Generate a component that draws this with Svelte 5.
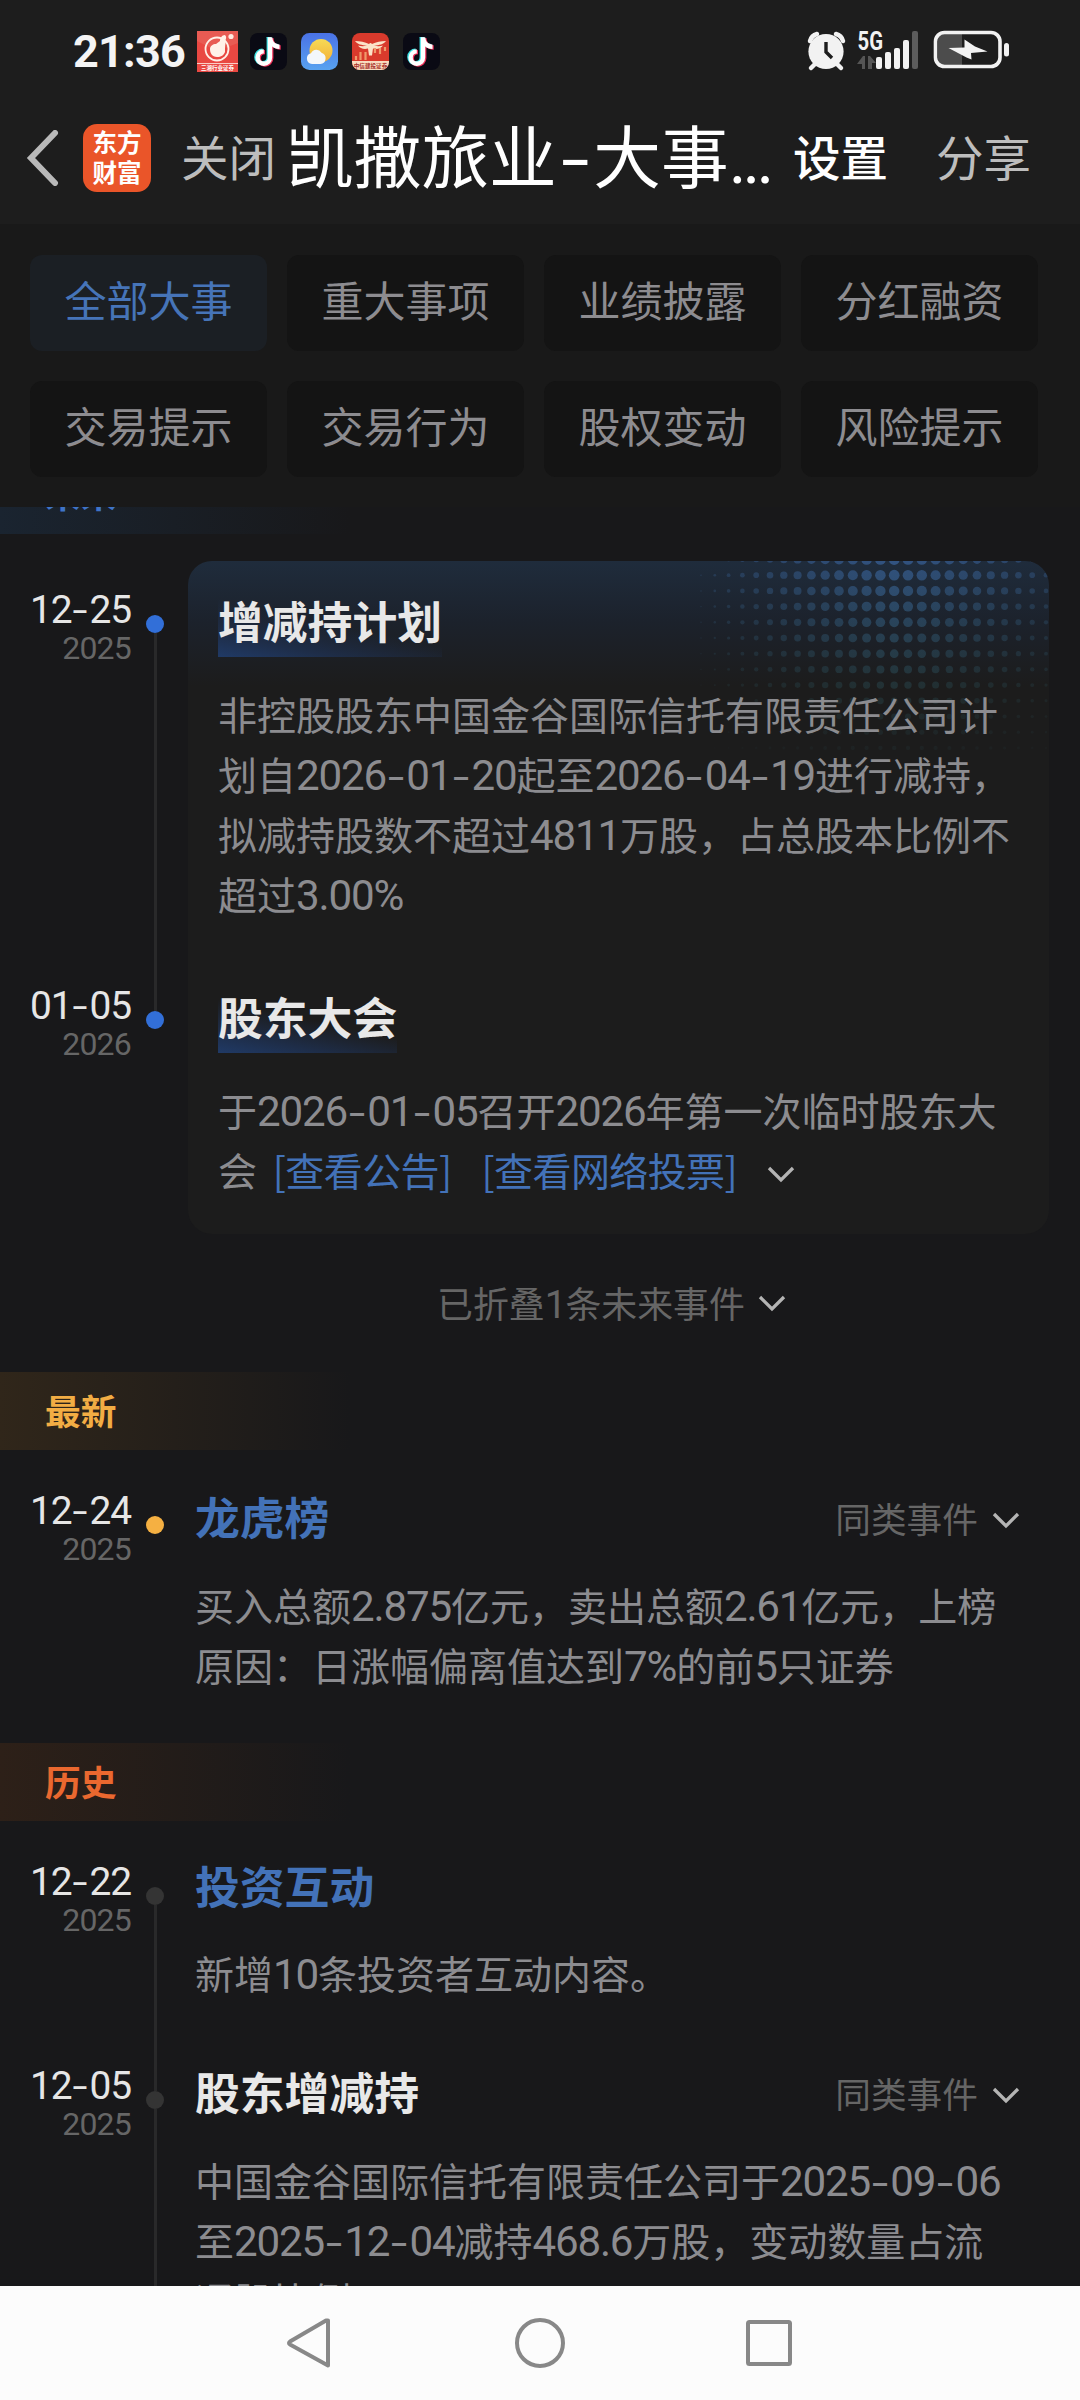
<script lang="ts">
  type Run = { text: string; kind: "cjk" | "num" | "dash" };

  const tabs = ["全部大事", "重大事项", "业绩披露", "分红融资", "交易提示", "交易行为", "股权变动", "风险提示"];
  let activeTab = $state(0);

  const future = [
    {
      date: "12-25",
      year: "2025",
      title: "增减持计划",
      lines: [
        "非控股股东中国金谷国际信托有限责任公司计",
        "划自2026-01-20起至2026-04-19进行减持，",
        "拟减持股数不超过4811万股，占总股本比例不",
        "超过3.00%"
      ],
      links: []
    },
    {
      date: "01-05",
      year: "2026",
      title: "股东大会",
      lines: ["于2026-01-05召开2026年第一次临时股东大", "会"],
      links: ["[查看公告]", "[查看网络投票]"]
    }
  ];

  const latest = [
    {
      date: "12-24",
      year: "2025",
      title: "龙虎榜",
      link: true,
      similar: true,
      lines: ["买入总额2.875亿元，卖出总额2.61亿元，上榜", "原因：日涨幅偏离值达到7%的前5只证券"]
    }
  ];

  const history = [
    {
      date: "12-22",
      year: "2025",
      title: "投资互动",
      link: true,
      similar: false,
      lines: ["新增10条投资者互动内容。"]
    },
    {
      date: "12-05",
      year: "2025",
      title: "股东增减持",
      link: false,
      similar: true,
      lines: [
        "中国金谷国际信托有限责任公司于2025-09-06",
        "至2025-12-04减持468.6万股，变动数量占流",
        "通股比例"
      ]
    }
  ];

  // 数字与连字符使用不同的字宽
  function split(text: string): Run[] {
    return (text.match(/[0-9.%]+|-|[^0-9.%-]+/g) ?? []).map((t) => ({
      text: t,
      kind: t === "-" ? "dash" : /[0-9]/.test(t) ? "num" : "cjk"
    }));
  }

  // 卡片右上角的半调圆点
  const dots: { x: number; y: number; r: number; o: number }[] = [];
  for (let row = 0; row < 13; row++) {
    for (let col = 0; col < 26; col++) {
      const dx = Math.abs(col - 14) * 13.8;
      const dy = row * 15.7;
      const r = 5.4 * (1 - Math.pow(dx / 210, 1.8)) * (1 - Math.pow(dy / 260, 1.6));
      const o = Math.max(0, 0.9 - dx / 360) * Math.max(0, 1 - row / 14);
      if (r > 0.4) dots.push({ x: 14 + col * 13.8, y: row * 15.7 - 1.5, r, o });
    }
  }
</script>

{#snippet rich(text: string)}
  {#each split(text) as run}<span class={run.kind}>{run.text}</span>{/each}
{/snippet}

{#snippet chevron()}
  <svg class="chevron" viewBox="0 0 28 18" width="28" height="18">
    <path d="M2 3l12 12L26 3" fill="none" stroke="currentColor" stroke-width="3.300" />
  </svg>
{/snippet}

{#snippet note(color: string, shift: string)}
  <g transform="translate({shift})">
    <path d="M19.500 4v20a6.200 6.200 0 1 1-6.200-6.200" fill="none" stroke={color} stroke-width="4.400" />
    <path d="M17.300 4h4.400c.5 4.200 3 6.600 7.300 7v4.400c-3.600 0-6.400-1.400-9-4z" fill={color} />
  </g>
{/snippet}

{#snippet douyin()}
  <svg viewBox="0 0 37 37" width="37" height="37">
    <rect width="37" height="37" rx="8" fill="#0a0a14" />
    {@render note("#3fe3e6", "-.700 0")}
    {@render note("#f0305a", "1.700 1.300")}
    {@render note("#fff", ".500 .600")}
  </svg>
{/snippet}

{#snippet stamp(date: string, year: string)}
  <div class="stamp">
    <div class="date">{@render rich(date)}</div>
    <div class="year">{year}</div>
  </div>
{/snippet}

{#snippet event(item: (typeof history)[number], tone: string)}
  <article class="event">
    {@render stamp(item.date, item.year)}
    <div class="axis {tone}"><i></i></div>
    <div class="content">
      <div class="head" class:tall={item.similar}>
        <h3 class:link={item.link}>{item.title}</h3>
        {#if item.similar}
          <span class="more">同类事件{@render chevron()}</span>
        {/if}
      </div>
      {#each item.lines as line}
        <p>{@render rich(line)}</p>
      {/each}
    </div>
  </article>
{/snippet}

<div class="screen">
  <div class="status">
    <span class="clock">21:36</span>
    <div class="apps">
      <svg viewBox="0 0 41 41" width="41" height="41">
        <rect width="41" height="41" fill="#e94842" />
        <path d="M0 0h41v12L20 20 0 10z" fill="#e8695f" opacity=".6" />
        <circle cx="20" cy="18" r="11.500" fill="none" stroke="#fff1e8" stroke-width="1.800" />
        <path d="M13 18c0-3 3-5 6-5l4-3c0-3 2-6 5-6 2 2 1 4 0 6 1 2 0 4 0 6v5c-1 3-4 5-8 5-5 0-7-4-7-8z" fill="#fff1e8" />
        <circle cx="34" cy="5.500" r="2.600" fill="#ffe9e0" />
        <path d="M0 32.500h41" stroke="#fff1e8" stroke-width=".8" />
        <text x="20.500" y="39" font-size="5.500" font-weight="700" text-anchor="middle" fill="#fff">三湘行业证券</text>
      </svg>
      {@render douyin()}
      <svg viewBox="0 0 37 37" width="37" height="37">
        <defs>
          <linearGradient id="sky" x2="0" y2="1"><stop stop-color="#4a72e6" /><stop offset="1" stop-color="#58a2f0" /></linearGradient>
          <linearGradient id="sun" x2="0" y2="1"><stop stop-color="#f7da55" /><stop offset="1" stop-color="#f3b23a" /></linearGradient>
        </defs>
        <rect width="37" height="37" rx="8.500" fill="url(#sky)" />
        <circle cx="20" cy="17.500" r="11.500" fill="url(#sun)" />
        <path d="M11 31a5.500 5.500 0 0 1-1-10.800 6 6 0 0 1 10.500-.5A5.800 5.800 0 0 1 19.500 31z" fill="#f3f7fb" />
      </svg>
      <svg viewBox="0 0 37 37" width="37" height="37">
        <defs><clipPath id="rc"><rect width="37" height="37" rx="8" /></clipPath></defs>
        <g clip-path="url(#rc)">
          <rect width="37" height="37" fill="#d93a2c" />
          <path d="M3 8c5 0 10 1 14 3q1.500-2 3 0c4-2 9-3 14-3-2 3-7 4.500-12 4.500 3 1 6 1 9 0-2 3-6 4-10 3l-1 7h-3l-1-7c-4 1-8 0-10-3 3 1 6 1 9 0C10 12.500 5 11 3 8z" fill="#fbe3c8" />
          <path d="M4 27v-4M8.500 27v-8M13.500 27v-8M23 20v-5M28 21v-6M33 18v-4" stroke="#ef9a6c" stroke-width="2.200" />
          <rect y="28" width="37" height="9" fill="#f8dcc0" />
          <text x="18.500" y="34.800" font-size="5.600" font-weight="700" text-anchor="middle" fill="#a8322a">中信建投证券</text>
        </g>
      </svg>
      {@render douyin()}
    </div>
    <svg class="indicators" viewBox="0 0 204 42" width="204" height="42">
      <g fill="none" stroke="#f2f2f2" stroke-width="4.500" stroke-linecap="round">
        <path d="M3 11a10 10 0 0 1 7-7M29 4a10 10 0 0 1 7 7" />
        <path d="M8 34l-4 4M30 34l4 4" />
      </g>
      <circle cx="19" cy="21.500" r="17.600" fill="#f2f2f2" />
      <path d="M19 12v10l6 6" fill="none" stroke="#1d1d1d" stroke-width="3.400" />
      <text x="50.500" y="20" font-size="25" font-weight="700" textLength="25.500" lengthAdjust="spacingAndGlyphs" fill="#f2f2f2">5G</text>
      <path d="M50 34l6-8h2v13h-3v-5zM61 26h2l6 7h-4v6h-4z" fill="#555" />
      <g fill="#f2f2f2">
        <rect x="69" y="27" width="6" height="12" rx="2" />
        <rect x="78" y="22" width="6" height="17" rx="2" />
        <rect x="87" y="18" width="6" height="21" rx="2" />
        <rect x="96" y="10" width="6" height="29" rx="2" />
        <rect x="105" y="1" width="6" height="38" rx="2" fill="#5c5c5c" />
      </g>
      <path d="M137 4h18v31h-18a6 6 0 0 1-6-6V10a6 6 0 0 1 6-6z" fill="#4c4c4c" />
      <rect x="128.500" y="2.500" width="64.500" height="34" rx="9" fill="none" stroke="#f2f2f2" stroke-width="3.600" />
      <rect x="197" y="13" width="5" height="13.500" rx="2.500" fill="#f2f2f2" />
      <path d="M157.500 9.500l10.500 7 12.500 5-16.500 1.500.500 6.500-5-2-18-9.500 16-.500z" fill="#f2f2f2" />
    </svg>
  </div>

  <header class="bar">
    <svg class="back" viewBox="0 0 34 56" width="34" height="56">
      <path d="M30 3L6 28l24 25" fill="none" stroke="#b9b9b9" stroke-width="6" stroke-linecap="round" />
    </svg>
    <div class="logo"><span>东方</span><span>财富</span></div>
    <span class="action">关闭</span>
    <h1>凯撒旅业<span class="dash">-</span>大事<span class="dots">...</span></h1>
    <span class="action strong">设置</span>
    <span class="action">分享</span>
  </header>

  <nav class="tabs">
    {#each tabs as tab, i}
      <button class:active={i === activeTab} onclick={() => (activeTab = i)}>{tab}</button>
    {/each}
  </nav>

  <main>
    <div class="scroll">
      <h2 class="blue">未来</h2>
      <section class="future">
        {#each future as item, i}
          <article class="event">
            {@render stamp(item.date, item.year)}
            <div class="axis blue"><i></i></div>
            <div class="content">
              {#if i === 0}
                <svg class="halftone" viewBox="0 0 362 210" width="362" height="210">
                  <defs>
                    <linearGradient id="tone" gradientUnits="userSpaceOnUse" x1="0" y1="0" x2="0" y2="130">
                      <stop stop-color="#34588a" />
                      <stop offset="1" stop-color="#2c545c" />
                    </linearGradient>
                  </defs>
                  {#each dots as dot}
                    <circle cx={dot.x} cy={dot.y} r={dot.r} opacity={dot.o} fill="url(#tone)" />
                  {/each}
                </svg>
              {/if}
              <h3><span>{item.title}</span></h3>
              {#each item.lines as line, n}
                <p>
                  {@render rich(line)}
                  {#if n === item.lines.length - 1 && item.links.length}
                    {#each item.links as link}<a href="#top">{link}</a>{/each}{@render chevron()}
                  {/if}
                </p>
              {/each}
            </div>
          </article>
        {/each}
      </section>
      <div class="folded">
        <span>已折叠<span class="num">1</span>条未来事件</span>
        {@render chevron()}
      </div>

      <h2 class="amber">最新</h2>
      <section class="plain">
        {#each latest as item}
          {@render event(item, "amber")}
        {/each}
      </section>

      <h2 class="orange">历史</h2>
      <section class="plain">
        {#each history as item}
          {@render event(item, "grey")}
        {/each}
      </section>
    </div>
  </main>

  <footer>
    <svg viewBox="0 0 50 54" width="50" height="54">
      <path d="M43 4.500v45L5 28.500q-2-1.500 0-3L41 4.500z" fill="none" stroke="#888" stroke-width="4" stroke-linejoin="round" />
    </svg>
    <svg viewBox="0 0 54 54" width="54" height="54">
      <circle cx="27" cy="27" r="23" fill="none" stroke="#888" stroke-width="4" />
    </svg>
    <svg viewBox="0 0 50 54" width="50" height="54">
      <rect x="3" y="6" width="42" height="42" rx="1.500" fill="none" stroke="#888" stroke-width="4" />
    </svg>
  </footer>
</div>

<style>
  :global(body) {
    background: #18181a;
  }

  .screen {
    display: flex;
    flex-direction: column;
    width: 1080px;
    height: 2400px;
    overflow: hidden;
    background: #18181a;
    color: #e6e6e6;
    font-family: "Noto Sans CJK SC", sans-serif;
  }

  h1,
  h2,
  h3,
  p {
    margin: 0;
  }

  .num {
    font-family: Roboto, sans-serif;
    font-size: 1.08em;
    letter-spacing: -0.028em;
    line-height: 1;
  }

  .dash {
    display: inline-block;
    width: 0.52em;
    font-family: Roboto, sans-serif;
    text-align: center;
    line-height: 1;
    transform: scaleX(1.5);
  }

  /* 状态栏 */
  .status {
    display: flex;
    align-items: center;
    height: 102px;
    flex: none;
    box-sizing: border-box;
    padding: 0 69px 0 73px;
    background: #1d1d1d;
  }

  .clock {
    width: 124px;
    font: 700 45px/1 Roboto, sans-serif;
    letter-spacing: -0.8px;
    color: #f4f4f4;
  }

  .apps {
    display: flex;
    align-items: center;
    gap: 14px;
  }

  .apps svg:first-child {
    margin-right: -2px;
  }

  .indicators {
    margin-left: auto;
    overflow: visible;
    font-family: Roboto, sans-serif;
  }

  /* 标题栏 */
  .bar {
    display: flex;
    align-items: center;
    height: 122px;
    flex: none;
    box-sizing: border-box;
    padding: 0 49px 10px 25px;
    background: #1d1d1d;
  }

  .logo {
    display: flex;
    flex-direction: column;
    justify-content: center;
    width: 68px;
    height: 68px;
    box-sizing: border-box;
    padding-bottom: 3px;
    margin: 0 30px 0 24px;
    border-radius: 14px;
    background: #ea5529;
    color: #fff;
    font-size: 24.5px;
    font-weight: 700;
    line-height: 30px;
    text-align: center;
  }

  .action {
    flex: none;
    padding-bottom: 4px;
    font-size: 47.5px;
    line-height: 64px;
    color: #bdbdbd;
  }

  .action.strong {
    margin: 0 48px 0 auto;
    font-weight: 500;
    color: #fff;
  }

  h1 {
    margin-left: 10px;
    padding-bottom: 4px;
    white-space: nowrap;
    font-size: 67.7px;
    font-weight: 400;
    line-height: 90px;
    color: #fff;
  }

  h1 .dash {
    width: 0.54em;
  }

  h1 .dots {
    font-family: Roboto, sans-serif;
    letter-spacing: -4px;
  }

  /* 分类标签 */
  .tabs {
    display: grid;
    grid-template-columns: repeat(4, 237px);
    grid-auto-rows: 96px;
    gap: 30px 20px;
    height: 283px;
    flex: none;
    box-sizing: border-box;
    padding: 31px 0 0 30px;
    background: #191919;
  }

  .tabs button {
    padding: 0 0 9px;
    border: 0;
    border-radius: 12px;
    background: #141414;
    color: #8d8c90;
    font: 42px/60px "Noto Sans CJK SC", sans-serif;
  }

  .tabs button.active {
    background: #1b1f24;
    color: #4674b8;
  }

  main {
    flex: 1;
    min-height: 0;
    overflow: hidden;
  }

  .scroll {
    margin-top: -51px;
  }

  h2 {
    height: 78px;
    padding-left: 45px;
    font-size: 35.7px;
    font-weight: 700;
    line-height: 76px;
  }

  h2.blue {
    color: #3f74c8;
    line-height: 74px;
    background: linear-gradient(90deg, #1a2430, #18181a 350px);
  }

  h2.amber {
    color: #f2ad44;
    background: linear-gradient(90deg, #30261a, #18181a 350px);
  }

  h2.orange {
    color: #ea682f;
    background: linear-gradient(90deg, #2d2018, #18181a 350px);
  }

  /* 时间轴 */
  .event {
    display: flex;
  }

  .stamp {
    width: 131px;
    flex: none;
    padding-top: 26px;
    text-align: right;
    white-space: nowrap;
  }

  .date {
    height: 40px;
    font-size: 36px;
    line-height: 40px;
  }

  .date .dash {
    width: 18px;
  }

  .year {
    margin-top: 3px;
    font: 32px/36px Roboto, sans-serif;
    letter-spacing: -0.8px;
    color: #666;
  }

  .axis {
    display: flex;
    flex-direction: column;
    align-items: center;
    width: 48px;
    flex: none;
    padding-top: 54px;
    box-sizing: border-box;
  }

  .axis i {
    width: 18px;
    height: 18px;
    border-radius: 50%;
    background: #343434;
  }

  .axis.blue i {
    background: #326fd8;
  }

  .axis.amber i {
    background: #f5b042;
  }

  .axis::after {
    content: "";
    flex: 1;
    width: 3px;
    margin-bottom: -54px;
    background: #29292a;
  }

  .axis.amber::after,
  .future .event:last-child .axis::after {
    display: none;
  }

  .content {
    flex: 1;
    box-sizing: border-box;
  }

  h3 {
    font-size: 44.8px;
    font-weight: 700;
    line-height: 56px;
    color: #e8e8e8;
  }

  h3.link {
    color: #4372b8;
  }

  p {
    height: 60px;
    font-size: 39px;
    line-height: 57px;
    white-space: nowrap;
    color: #8c8c90;
  }

  .chevron {
    color: #b4b4b4;
  }

  .future {
    padding: 27px 31px 0 0;
  }

  .future .content {
    position: relative;
    margin-left: 9px;
    padding: 31px 0 32px 30px;
    background: #1c1c1c;
  }

  .future .event:first-child .content {
    border-radius: 24px 24px 0 0;
    background: linear-gradient(#1f2c3c, #1c222c 60px, #1c1c1c 125px);
    overflow: hidden;
  }

  .future .event:last-child .content {
    padding-bottom: 33px;
    border-radius: 0 0 24px 24px;
  }

  .future h3 {
    position: relative;
    margin-bottom: 37px;
  }

  .future h3 span {
    display: inline-block;
    height: 65px;
    margin-bottom: -9px;
    background: linear-gradient(12deg, #203a66, #1e2d48 22%, transparent 52%);
  }

  .future p {
    position: relative;
  }

  .halftone {
    position: absolute;
    top: 0;
    right: 0;
  }

  a {
    margin-left: 7px;
    color: #4372b8;
    letter-spacing: -0.6px;
    text-decoration: none;
  }

  a + a {
    margin-left: 30px;
  }

  p .chevron {
    margin: 0 0 3px 30px;
  }

  .folded {
    display: flex;
    align-items: center;
    justify-content: center;
    gap: 13px;
    height: 138px;
    padding-left: 143px;
    font-size: 35.9px;
    color: #666;
  }

  .folded span {
    padding-bottom: 3px;
  }

  .plain {
    padding: 12px 0 17px;
  }

  .plain .event {
    min-height: 204px;
  }

  .plain .content {
    padding: 27px 60px 30px 16px;
  }

  .head {
    display: flex;
    align-items: center;
    justify-content: space-between;
    height: 55px;
    margin-bottom: 29px;
  }

  .head h3 {
    padding-bottom: 5px;
  }

  .head.tall {
    height: 58px;
  }

  .more {
    display: flex;
    align-items: center;
    gap: 14px;
    font-size: 35.7px;
    line-height: 50px;
    color: #666;
  }

  .more .chevron {
    margin-top: 4px;
  }

  /* 导航栏 */
  footer {
    display: flex;
    align-items: center;
    height: 114px;
    flex: none;
    box-sizing: border-box;
    padding-left: 285px;
    gap: 178px;
    background: #fcfcfc;
  }
</style>
